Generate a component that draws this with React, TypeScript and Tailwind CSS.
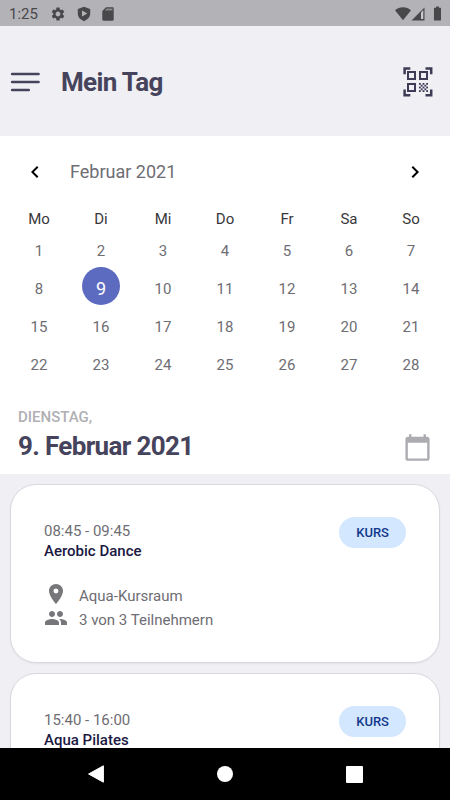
import React, { useState } from "react";
import {
  MdBatteryFull,
  MdCalendarToday,
  MdLocationOn,
  MdNavigateBefore,
  MdNavigateNext,
  MdPeople,
  MdSettings,
} from "react-icons/md";

const WEEKDAYS = ["Mo", "Di", "Mi", "Do", "Fr", "Sa", "So"];
const WEEKS = [0, 1, 2, 3].map((w) => WEEKDAYS.map((_, d) => w * 7 + d + 1));

type Course = { time: string; name: string; room?: string; people?: string };

const COURSES: Course[] = [
  { time: "08:45 - 09:45", name: "Aerobic Dance", room: "Aqua-Kursraum", people: "3 von 3 Teilnehmern" },
  { time: "15:40 - 16:00", name: "Aqua Pilates" },
];

function ShieldIcon() {
  return (
    <svg width="14" height="16" viewBox="0 0 14 16" fill="#48484a" aria-hidden="true">
      <path
        fillRule="evenodd"
        d="M7 .8 13.2 3v4.8c0 3.3-2.6 6-6.2 7.4C3.4 13.8.8 11.1.8 7.8V3L7 .8ZM5 4.6v6l5.3-3L5 4.6Z"
      />
    </svg>
  );
}

function SdIcon() {
  return (
    <svg width="12" height="14" viewBox="0 0 12 14" aria-hidden="true">
      <path d="M4 .3h6.5c.7 0 1.200.5 1.200 1.200v11c0 .7-.5 1.200-1.200 1.200h-9c-.7 0-1.200-.5-1.200-1.200V4L4 .3Z" fill="#48484a" />
      <path d="M4.500 1.500h6v2H2.800l1.700-2Z" fill="#85858a" />
    </svg>
  );
}

function WifiIcon() {
  return (
    <svg width="16" height="14" viewBox="0 0 16 14" fill="#48484a" aria-hidden="true">
      <path d="M0 3.200C2.200 1.300 5 .3 8 .3s5.800 1 8 2.900L8 13.200 0 3.200Z" />
    </svg>
  );
}

function SignalIcon() {
  return (
    <svg width="14" height="14" viewBox="0 0 14 14" aria-hidden="true">
      <path d="M13.500.5v13H.5l13-13Z" fill="#48484a" />
      <path d="M10 5.500 12.300 3v9H10V5.500Z" fill="#c9c9cd" />
    </svg>
  );
}

function MenuIcon() {
  return (
    <svg width="30" height="22" viewBox="0 0 30 22" stroke="#46445c" strokeWidth="2.7" strokeLinecap="round" aria-hidden="true">
      <path d="M2.200 3h26.300M2.200 11h26.300M2.200 19h16.500" />
    </svg>
  );
}

const CHECKER = Array.from({ length: 25 }, (_, i) => i).filter((i) => i % 2 === 0);

function ScanIcon() {
  return (
    <svg width="30" height="30" viewBox="0 0 30 30" fill="none" stroke="#3d3b56" aria-hidden="true">
      <path d="M1.600 7.300V1.600h5.700M22.500 1.600h5.700v5.700M1.600 22.500v5.700h5.700M22.500 28.200h5.700v-5.700" strokeWidth="2.500" />
      <path d="M5 5h7v7H5zM17 5h7v7h-7zM5 17h7v7H5z" strokeWidth="2" />
      {CHECKER.map((i) => (
        <rect key={i} x={16 + (i % 5) * 1.8} y={16 + Math.floor(i / 5) * 1.8} width="1.800" height="1.800" fill="#3d3b56" stroke="none" />
      ))}
    </svg>
  );
}

function StatusBar() {
  return (
    <div className="flex h-[26px] shrink-0 items-center bg-[#b3b2b7] pt-px pr-2 pl-[9px] text-[#48484a]">
      <span className="text-[15px] leading-5">1:25</span>
      <div className="ml-3 flex items-center gap-[11px]">
        <MdSettings size={16} />
        <ShieldIcon />
        <SdIcon />
      </div>
      <div className="ml-auto flex items-center">
        <WifiIcon />
        <SignalIcon />
        <MdBatteryFull size={17} className="ml-1 -mr-1" />
      </div>
    </div>
  );
}

function Calendar({ selected, onSelect }: { selected: number; onSelect: (day: number) => void }) {
  return (
    <section className="px-2 pt-6">
      <div className="flex h-6 items-center px-[15px]">
        <button type="button" aria-label="Vorheriger Monat" className="text-black">
          <MdNavigateBefore size={24} />
        </button>
        <h2 className="ml-[23px] text-[18px] leading-6 text-[#6e6d73]">Februar 2021</h2>
        <button type="button" aria-label="Nächster Monat" className="ml-auto text-black">
          <MdNavigateNext size={24} />
        </button>
      </div>
      <table className="mt-[25px] w-full table-fixed border-collapse">
        <thead>
          <tr>
            {WEEKDAYS.map((d) => (
              <th key={d} scope="col" className="h-5 p-0 text-center text-[15px] leading-5 font-normal text-[#38373b]">
                {d}
              </th>
            ))}
          </tr>
        </thead>
        <tbody>
          {WEEKS.map((week) => (
            <tr key={week[0]}>
              {week.map((day) => (
                <td key={day} className="p-0 text-center">
                  <button
                    type="button"
                    aria-pressed={day === selected}
                    onClick={() => onSelect(day)}
                    className={
                      day === selected
                        ? "mx-auto flex size-[38px] items-center justify-center rounded-full bg-[#5c6bc0] pt-1 text-[18px] text-white"
                        : "mx-auto flex size-[38px] items-center justify-center rounded-full pt-1.5 text-[15px] text-[#6e6d73]"
                    }
                  >
                    {day}
                  </button>
                </td>
              ))}
            </tr>
          ))}
        </tbody>
      </table>
    </section>
  );
}

function CourseCard({ course }: { course: Course }) {
  return (
    <article className="shrink-0 rounded-[26px] border border-[#d9d8de] bg-white px-[33px] py-8 shadow-xs">
      <div className="flex items-start justify-between">
        <div className="pt-1 text-[15px] leading-5">
          <p className="text-[#6e6d73]">{course.time}</p>
          <h3 className="font-medium text-[#1b1842]">{course.name}</h3>
        </div>
        <span className="rounded-full bg-[#d3e7ff] px-[17px] py-[5px] text-[13px] leading-[21px] font-medium text-[#12388c]">
          KURS
        </span>
      </div>
      {course.room && (
        <ul className="mt-[21px] text-[15px] leading-5 text-[#6e6d73]">
          <li className="flex items-center gap-[11px]">
            <MdLocationOn size={24} className="text-[#77767b]" />
            <span className="pt-1">{course.room}</span>
          </li>
          <li className="flex items-center gap-[11px]">
            <MdPeople size={24} className="text-[#77767b]" />
            <span className="pt-1">{course.people}</span>
          </li>
        </ul>
      )}
    </article>
  );
}

export default function App() {
  const [selected, setSelected] = useState(9);

  return (
    <div className="flex h-screen flex-col overflow-hidden bg-[#efeff4] font-[Roboto,'Liberation_Sans',sans-serif]">
      <StatusBar />
      <header className="flex h-[110px] shrink-0 items-center px-[10px] pt-px">
        <button type="button" aria-label="Menü">
          <MenuIcon />
        </button>
        <h1 className="ml-[21px] text-[26px] leading-8 font-bold tracking-tight text-[#46445c]">Mein Tag</h1>
        <button type="button" aria-label="QR-Code scannen" className="mr-[7px] ml-auto">
          <ScanIcon />
        </button>
      </header>
      <main className="flex min-h-0 flex-1 flex-col">
        <div className="shrink-0 bg-white pb-3">
          <Calendar selected={selected} onSelect={setSelected} />
          <div className="flex items-end justify-between px-[18px] pt-[26px]">
            <div>
              <p className="text-[15px] leading-5 font-medium text-[#b0afb4]">DIENSTAG,</p>
              <p className="mt-[3px] text-[26px] leading-8 font-bold tracking-tight text-[#46445c]">{selected}. Februar 2021</p>
            </div>
            <button type="button" aria-label="Datum wählen" className="text-[#adacb1]">
              <MdCalendarToday size={29} />
            </button>
          </div>
        </div>
        <div className="flex min-h-0 flex-1 flex-col gap-[10px] overflow-hidden px-[10px] pt-[10px]">
          {COURSES.map((course) => (
            <CourseCard key={course.time} course={course} />
          ))}
        </div>
      </main>
      <nav className="flex h-[52px] shrink-0 items-center justify-center gap-[113px] bg-black">
        <button type="button" aria-label="Zurück">
          <svg width="16" height="18" viewBox="0 0 16 18" fill="#fff" stroke="#fff" strokeLinejoin="round" aria-hidden="true">
            <path d="M.6 9 15.400.8v16.400z" />
          </svg>
        </button>
        <button type="button" aria-label="Startseite" className="size-4 rounded-full bg-white" />
        <button type="button" aria-label="Übersicht" className="size-[17px] rounded-[1px] bg-white" />
      </nav>
    </div>
  );
}
